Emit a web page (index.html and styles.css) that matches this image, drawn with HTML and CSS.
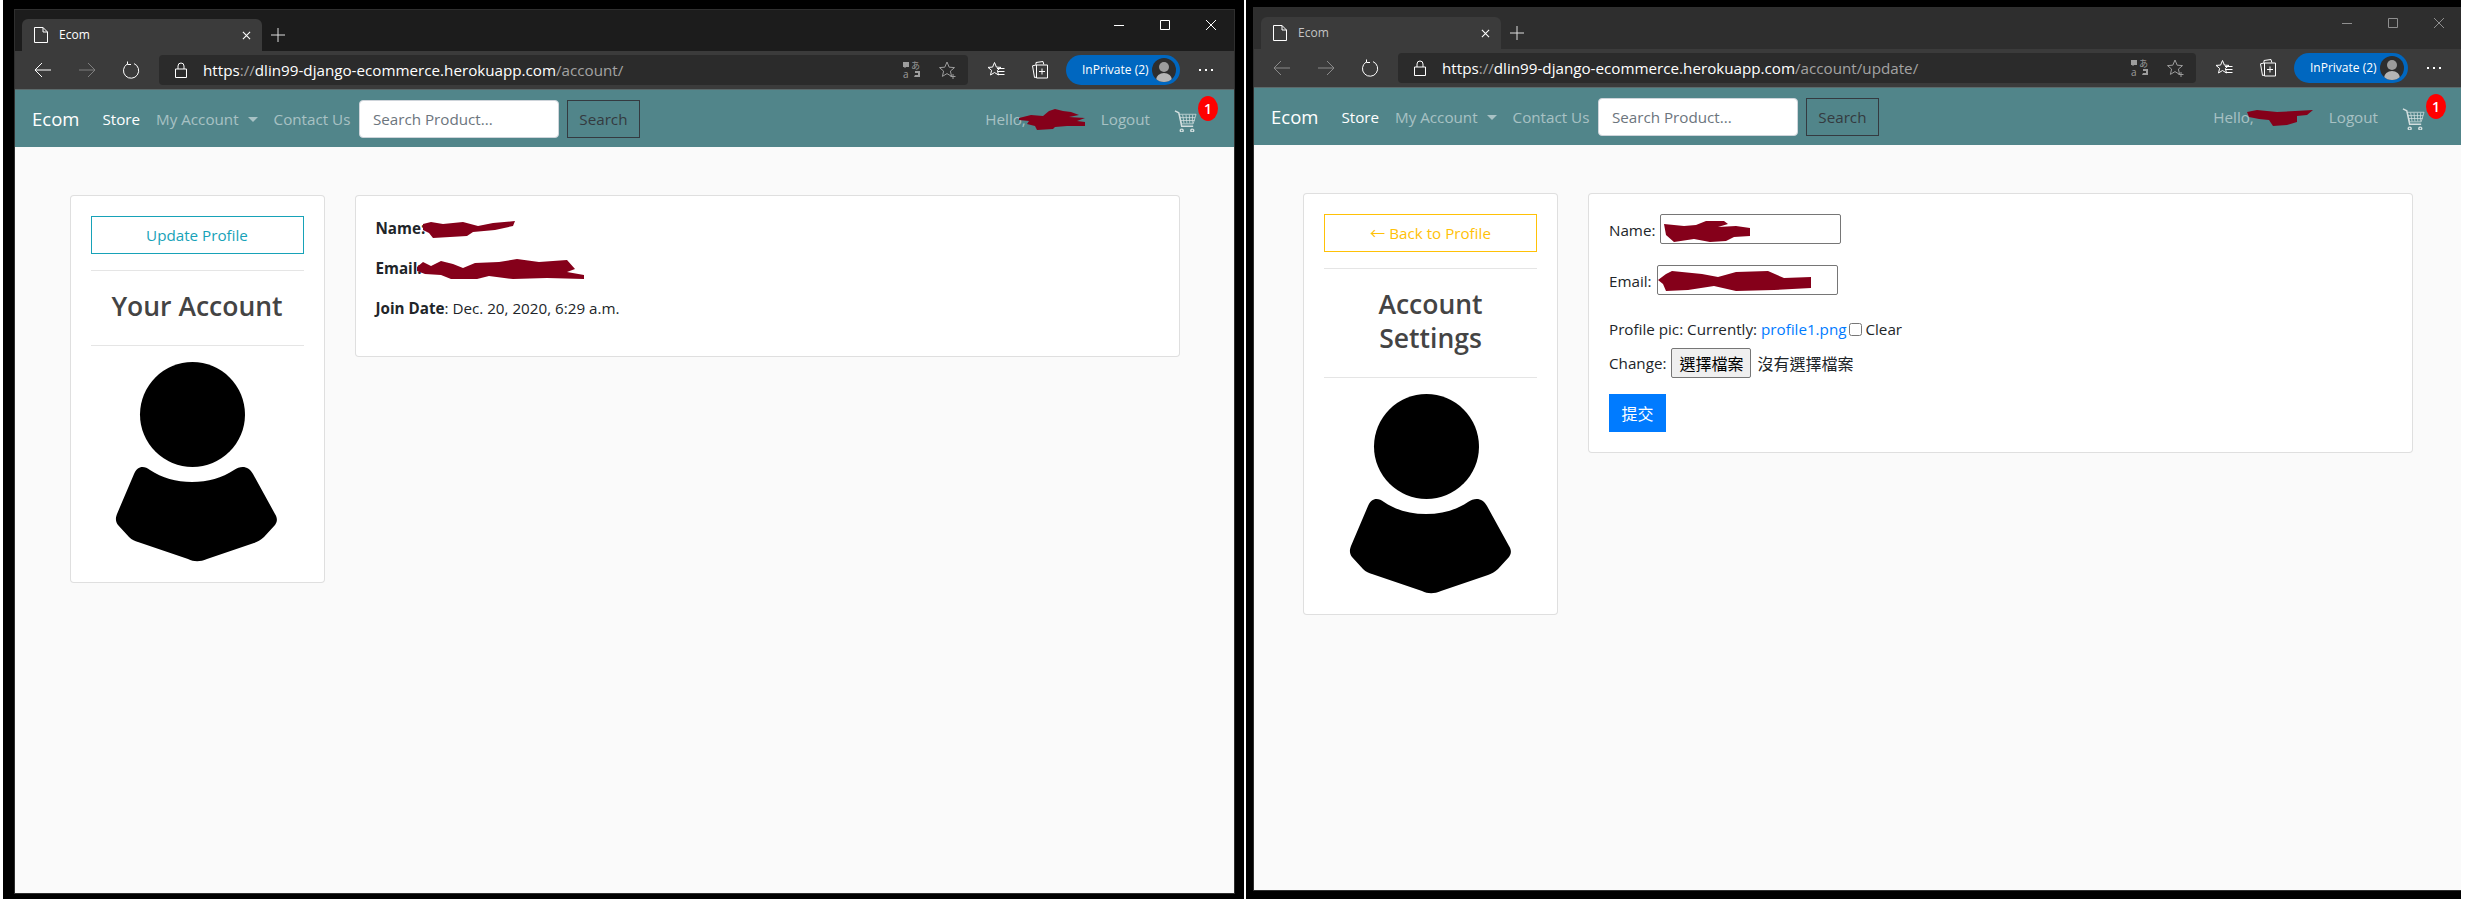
FILE: index.html
```html
<!DOCTYPE html>
<html lang="en">
<head>
    <meta charset="utf-8">
    <title>Ecom</title>
    <link rel="stylesheet" href="styles.css">
</head>
<body>
    <!-- shared browser + page icons -->
    <svg class="sprite" xmlns="http://www.w3.org/2000/svg">
        <symbol id="i-doc" viewBox="0 0 14 16"><path d="M.5.5h8.500l4.500 4.500v10.500H.5zM9 .5v4.500h4.500" fill="none" stroke="currentColor"/></symbol>
        <symbol id="i-close" viewBox="0 0 10 10"><path d="M1 1l8 8M9 1l-8 8" fill="none" stroke="currentColor" stroke-width="1.200"/></symbol>
        <symbol id="i-plus" viewBox="0 0 14 14"><path d="M7 0v14M0 7h14" fill="none" stroke="currentColor"/></symbol>
        <symbol id="i-min" viewBox="0 0 12 12"><path d="M1 6.500h10" fill="none" stroke="currentColor"/></symbol>
        <symbol id="i-max" viewBox="0 0 12 12"><path d="M1.500 1.500h9v9h-9z" fill="none" stroke="currentColor"/></symbol>
        <symbol id="i-x" viewBox="0 0 12 12"><path d="M1 1l10 10M11 1L1 11" fill="none" stroke="currentColor"/></symbol>
        <symbol id="i-back" viewBox="0 0 18 16"><path d="M1 8h16M8 1L1 8l7 7" fill="none" stroke="currentColor"/></symbol>
        <symbol id="i-forward" viewBox="0 0 18 16"><path d="M1 8h16M10 1l7 7-7 7" fill="none" stroke="currentColor"/></symbol>
        <symbol id="i-refresh" viewBox="0 0 18 18"><path d="M5 3.200A7.600 7.600 0 1 0 12 2.600M5.500 .5V3.500H9" fill="none" stroke="currentColor"/></symbol>
        <symbol id="i-lock" viewBox="0 0 12 16"><path d="M.5 7h11v8.500H.5zM3 7V4a3 3 0 0 1 6 0v3" fill="none" stroke="currentColor"/></symbol>
        <symbol id="i-translate" viewBox="0 0 20 18">
            <path d="M1 1h6v5H4l-1 1-1-1H1zM13 10l5 0v6h-6l1-2h3v-2h-3z" fill="currentColor"/>
            <text x="9" y="7.500" font-size="9" fill="currentColor">あ</text>
            <text x="1" y="17" font-size="10" fill="currentColor">a</text>
        </symbol>
        <symbol id="i-star-plus" viewBox="0 0 18 18"><path d="M8 1l2.200 5.200 5.300.4-4.100 3.500 1.200 5.300L8 12.600 3.400 15.400l1.200-5.300L.5 6.600l5.300-.4zM14 13v5M11.500 15.500h5" fill="none" stroke="currentColor"/></symbol>
        <symbol id="i-favs" viewBox="0 0 18 18"><path d="M7.500 1.500l1.900 4.600 4.600.3-3.600 3 1.100 4.600-4-2.500-4 2.500 1.100-4.600-3.600-3 4.600-.3z" fill="none" stroke="currentColor"/><path d="M10 7.500h7.500M10.500 10.500h7M10.500 13.500h7" stroke="currentColor"/></symbol>
        <symbol id="i-collections" viewBox="0 0 18 18"><path d="M5 4l-3.500.8 2 11.700 2.500-.5M5 4V1.500l7-1 .8 3" fill="none" stroke="currentColor"/><path d="M5.500 4h11v13h-11zM11 7.500v6M8 10.500h6" fill="none" stroke="currentColor"/></symbol>
        <symbol id="i-cart" viewBox="0 0 24 24">
            <path d="M1 2l4 2 3 14h12M8 21a1.500 1.500 0 1 0 .1 0M19 21a1.500 1.500 0 1 0 .1 0" fill="none" stroke="currentColor" stroke-width="1.500"/>
            <path d="M5.500 5.500h17.500l-3 10H8zM9 6l1.500 9M12.500 6l1 9M16 6l.5 9M19.500 6l-.5 9M6.500 9h15.500M7 12h14.500" fill="none" stroke="currentColor" stroke-width=".8"/>
        </symbol>
        <symbol id="i-person" viewBox="0 0 200 200">
            <circle cx="95.500" cy="52.500" r="52.500"/>
            <path d="M37 112C40 104 47 103 53 108 65 116 79 120 95 120 111 120 125 116 137 108 144 103 152 104 156 112L178 152C181 157 180 160 178 163L167 175C164 178 160 180 157 181L110 197C103 200 97 200 91 197L41 180C38 179 35 178 32 175L21 163C19 160 18 157 20 152Z"/>
        </symbol>
    </svg>

    <div class="screen">
        <!-- Account page -->
        <div class="window window-main">
            <div class="tabstrip">
                <div class="tab">
                    <svg class="tab-icon"><use href="#i-doc"/></svg>
                    <span class="tab-title">Ecom</span>
                    <svg class="tab-close"><use href="#i-close"/></svg>
                </div>
                <svg class="new-tab"><use href="#i-plus"/></svg>
                <div class="win-controls">
                    <span class="win-btn"><svg><use href="#i-min"/></svg></span>
                    <span class="win-btn"><svg><use href="#i-max"/></svg></span>
                    <span class="win-btn"><svg><use href="#i-x"/></svg></span>
                </div>
            </div>
            <div class="toolbar">
                <span class="tool-btn"><svg class="icon-arrow"><use href="#i-back"/></svg></span>
                <span class="tool-btn is-off"><svg class="icon-arrow"><use href="#i-forward"/></svg></span>
                <span class="tool-btn"><svg class="icon-refresh"><use href="#i-refresh"/></svg></span>
                <div class="address">
                    <svg class="icon-lock"><use href="#i-lock"/></svg>
                    <span class="url">https<span class="url-dim">://</span>dlin99-django-ecommerce.herokuapp.com<span class="url-dim">/account/</span></span>
                    <svg class="icon-translate"><use href="#i-translate"/></svg>
                    <svg class="icon-star"><use href="#i-star-plus"/></svg>
                </div>
                <span class="tool-btn"><svg class="icon-tool"><use href="#i-favs"/></svg></span>
                <span class="tool-btn"><svg class="icon-tool"><use href="#i-collections"/></svg></span>
                <div class="inprivate">
                    <span>InPrivate (2)</span>
                    <span class="avatar"><span class="avatar-head"></span><span class="avatar-body"></span></span>
                </div>
                <span class="tool-btn dots"><i></i><i></i><i></i></span>
            </div>
            <nav class="navbar">
                <a class="brand">Ecom</a>
                <a class="nav-link is-active">Store</a>
                <a class="nav-link">My Account<span class="caret"></span></a>
                <a class="nav-link nav-contact">Contact Us</a>
                <input class="search-input" placeholder="Search Product...">
                <button class="search-btn">Search</button>
                <div class="nav-right">
                    <span class="hello">Hello,<svg class="scribble scrib-hello" viewBox="0 0 66 21" preserveAspectRatio="none"><path d="M0 9L12 6 24 7 30 2 36 0 44 2 52 3 60 6 50 8 66 9 58 12 66 13 66 17 48 17 36 18 34 20 18 21 16 17 8 15 10 12 0 11Z"/></svg></span>
                    <a class="nav-link nav-logout">Logout</a>
                    <span class="cart">
                        <svg class="cart-icon"><use href="#i-cart"/></svg>
                        <span class="cart-badge">1</span>
                    </span>
                </div>
            </nav>
            <main class="page">
                <div class="container">
                    <aside class="side-card">
                        <a class="btn btn-info">Update Profile</a>
                        <hr>
                        <h3>Your Account</h3>
                        <hr>
                        <svg class="person"><use href="#i-person"/></svg>
                    </aside>
                    <section class="info-card">
                        <p><strong>Name:</strong><svg class="scribble scrib-name" viewBox="0 0 92 17" preserveAspectRatio="none"><path d="M0 3L8 1 20 3 40 1 55 5 70 2 92 0 90 5 72 9 50 11 44 15 10 17 6 12 0 9Z"/></svg></p>
                        <p><strong>Email:</strong><svg class="scribble scrib-email" viewBox="0 0 167 20" preserveAspectRatio="none"><path d="M0 8L6 3 14 7 24 2 36 5 46 9 58 4 82 3 100 0 122 3 150 1 158 10 150 13 167 16 167 20 130 19 96 20 72 17 60 20 34 20 24 16 8 15 0 12Z"/></svg></p>
                        <p><strong>Join Date</strong>: Dec. 20, 2020, 6:29 a.m.</p>
                    </section>
                </div>
            </main>
        </div>

        <div class="divider"></div>

        <!-- Account settings page -->
        <div class="window window-update">
            <div class="tabstrip">
                <div class="tab">
                    <svg class="tab-icon"><use href="#i-doc"/></svg>
                    <span class="tab-title">Ecom</span>
                    <svg class="tab-close"><use href="#i-close"/></svg>
                </div>
                <svg class="new-tab"><use href="#i-plus"/></svg>
                <div class="win-controls">
                    <span class="win-btn"><svg><use href="#i-min"/></svg></span>
                    <span class="win-btn"><svg><use href="#i-max"/></svg></span>
                    <span class="win-btn"><svg><use href="#i-x"/></svg></span>
                </div>
            </div>
            <div class="toolbar">
                <span class="tool-btn is-off"><svg class="icon-arrow"><use href="#i-back"/></svg></span>
                <span class="tool-btn is-off"><svg class="icon-arrow"><use href="#i-forward"/></svg></span>
                <span class="tool-btn"><svg class="icon-refresh"><use href="#i-refresh"/></svg></span>
                <div class="address">
                    <svg class="icon-lock"><use href="#i-lock"/></svg>
                    <span class="url">https<span class="url-dim">://</span>dlin99-django-ecommerce.herokuapp.com<span class="url-dim">/account/update/</span></span>
                    <svg class="icon-translate"><use href="#i-translate"/></svg>
                    <svg class="icon-star"><use href="#i-star-plus"/></svg>
                </div>
                <span class="tool-btn"><svg class="icon-tool"><use href="#i-favs"/></svg></span>
                <span class="tool-btn"><svg class="icon-tool"><use href="#i-collections"/></svg></span>
                <div class="inprivate">
                    <span>InPrivate (2)</span>
                    <span class="avatar"><span class="avatar-head"></span><span class="avatar-body"></span></span>
                </div>
                <span class="tool-btn dots"><i></i><i></i><i></i></span>
            </div>
            <nav class="navbar">
                <a class="brand">Ecom</a>
                <a class="nav-link is-active">Store</a>
                <a class="nav-link">My Account<span class="caret"></span></a>
                <a class="nav-link nav-contact">Contact Us</a>
                <input class="search-input" placeholder="Search Product...">
                <button class="search-btn">Search</button>
                <div class="nav-right">
                    <span class="hello">Hello,<svg class="scribble scrib-hello-2" viewBox="0 0 66 16" preserveAspectRatio="none"><path d="M0 2L10 0 30 2 66 0 60 5 50 6 50 12 40 15 26 16 22 10 12 9 2 7Z"/></svg></span>
                    <a class="nav-link nav-logout">Logout</a>
                    <span class="cart">
                        <svg class="cart-icon"><use href="#i-cart"/></svg>
                        <span class="cart-badge">1</span>
                    </span>
                </div>
            </nav>
            <main class="page">
                <div class="container">
                    <aside class="side-card">
                        <a class="btn btn-warning">&#8592; Back to Profile</a>
                        <hr>
                        <h3>Account Settings</h3>
                        <hr>
                        <svg class="person"><use href="#i-person"/></svg>
                    </aside>
                    <section class="info-card">
                        <form>
                            <div class="form-row row-name">
                                <label>Name:</label>
                                <span class="field">
                                    <input class="text-field" type="text">
                                    <svg class="scribble scrib-field-name" viewBox="0 0 86 21" preserveAspectRatio="none"><path d="M0 3L20 5 32 4 42 0 60 0 64 3 54 6 72 5 86 7 86 15 70 16 62 20 46 21 30 18 10 21 2 14Z"/></svg>
                                </span>
                            </div>
                            <div class="form-row row-email">
                                <label>Email:</label>
                                <span class="field">
                                    <input class="text-field" type="email">
                                    <svg class="scribble scrib-field-email" viewBox="0 0 153 20" preserveAspectRatio="none"><path d="M0 9L8 3 14 0 44 3 60 6 78 1 110 0 126 7 153 6 153 17 116 19 78 20 56 15 30 19 8 20 5 13Z"/></svg>
                                </span>
                            </div>
                            <p class="form-line">Profile pic: Currently: <a class="file-link">profile1.png</a><input class="clear-box" type="checkbox">Clear</p>
                            <div class="form-row row-file">
                                <label>Change:</label>
                                <button type="button" class="file-btn">選擇檔案</button>
                                <span class="file-none">沒有選擇檔案</span>
                            </div>
                            <button type="button" class="submit-btn">提交</button>
                        </form>
                    </section>
                </div>
            </main>
        </div>
    </div>
</body>
</html>
```

FILE: styles.css
```css
/* Global styles */
* {
    box-sizing: border-box;
}

html, body {
    margin: 0;
    padding: 0;
    height: 899px;
    overflow: hidden;
    background: #fff;
    font-family: "Open Sans", "Noto Sans CJK TC", sans-serif;
    font-size: 15.2px;
    line-height: 24px;
    color: #212529;
}

.sprite {
    display: none;
}

/* Black desktop behind both browser windows */
.screen {
    display: flex;
    align-items: flex-start;
    margin-left: 3px;
    width: 2458px;
    height: 899px;
    background: #000;
    overflow: hidden;
}

.divider {
    flex: none;
    width: 2px;
    height: 899px;
    margin: 0 7px 0 9px;
    background: #fff;
}

.window {
    flex: none;
    display: flex;
    flex-direction: column;
    border: 1px solid #2f2f2f;
}

.window-main {
    width: 1221px;
    height: 885px;
    margin: 9px 0 0 11px;
}

.window-update {
    width: 1210px;
    height: 884px;
    margin-top: 7px;
}

/* Tab strip */
.tabstrip {
    flex: none;
    display: flex;
    align-items: flex-end;
    height: 41px;
    padding-left: 7px;
    background: #1c1c1c;
    color: #fff;
}

.window-update .tabstrip {
    background: #2e2e2e;
}

.tab {
    display: flex;
    align-items: center;
    width: 240px;
    height: 32px;
    padding: 0 12px;
    background: #3b3b3b;
    border-radius: 6px 6px 0 0;
}

.tab-icon {
    width: 14px;
    height: 16px;
}

.tab-title {
    margin-left: 11px;
    font-size: 12px;
}

.window-update .tab-title {
    color: #c4c4c4;
}

.tab-close {
    width: 9px;
    height: 9px;
    margin-left: auto;
    margin-right: -1px;
}

.new-tab {
    width: 14px;
    height: 14px;
    margin: 0 0 9px 9px;
    color: #ddd;
}

.win-controls {
    display: flex;
    align-self: flex-start;
    margin-left: auto;
}

.win-btn {
    display: flex;
    align-items: center;
    justify-content: center;
    width: 46px;
    height: 30px;
}

.win-btn svg {
    width: 12px;
    height: 12px;
}

.window-update .win-btn {
    color: #8f8f8f;
}

/* Address bar row */
.toolbar {
    flex: none;
    display: flex;
    align-items: center;
    height: 38px;
    padding: 0 6px;
    background: #3b3b3b;
    color: #fff;
}

.tool-btn {
    flex: none;
    display: flex;
    align-items: center;
    justify-content: center;
    width: 44px;
    height: 30px;
}

.tool-btn.is-off {
    color: #7f7f7f;
}

.window-update .icon-arrow {
    color: #8a8a8a;
}

.icon-arrow {
    width: 18px;
    height: 16px;
}

.icon-refresh {
    width: 18px;
    height: 18px;
}

.icon-tool {
    width: 18px;
    height: 18px;
}

.address {
    flex: 1;
    display: flex;
    align-items: center;
    height: 30px;
    margin: 0 6px;
    padding: 0 11px 0 16px;
    background: #2b2b2b;
    border-radius: 4px;
}

.icon-lock {
    width: 12px;
    height: 16px;
}

.url {
    margin-left: 16px;
    font-size: 15.2px;
    white-space: nowrap;
}

.url-dim {
    color: #a3a3a3;
}

.icon-translate {
    width: 20px;
    height: 18px;
    margin-left: auto;
    color: #9d9d9d;
}

.icon-star {
    width: 18px;
    height: 18px;
    margin-left: 17px;
    color: #9d9d9d;
}

.inprivate {
    flex: none;
    display: flex;
    align-items: center;
    justify-content: space-between;
    width: 114px;
    height: 30px;
    margin: 0 4px;
    padding: 0 4px 0 16px;
    background: #0067c0;
    border-radius: 15px;
    font-size: 12px;
}

.avatar {
    position: relative;
    width: 24px;
    height: 24px;
    background: #2e2e2e;
    border-radius: 50%;
    overflow: hidden;
}

.avatar-head {
    position: absolute;
    top: 4px;
    left: 7px;
    width: 10px;
    height: 10px;
    background: #9c9c9c;
    border-radius: 50%;
}

.avatar-body {
    position: absolute;
    top: 15px;
    left: 4px;
    width: 16px;
    height: 14px;
    background: #b5b5b5;
    border-radius: 50%;
}

.dots {
    gap: 4px;
}

.dots i {
    width: 2px;
    height: 2px;
    background: #fff;
}

/* Site navigation */
.navbar {
    flex: none;
    display: flex;
    align-items: center;
    height: 58px;
    padding: 0 16px 0 17px;
    background: #51858a;
    border-top: 1px solid #5c6a6b;
}

.brand {
    margin-right: 15px;
    font-size: 18.500px;
    color: #fff;
}

.nav-link {
    padding: 0 8px;
    color: rgba(255, 255, 255, 0.5);
    white-space: nowrap;
}

.nav-link.is-active {
    color: #fff;
}

.caret {
    display: inline-block;
    margin-left: 9px;
    vertical-align: 3px;
    border-top: 5px solid rgba(255, 255, 255, 0.5);
    border-left: 5px solid transparent;
    border-right: 5px solid transparent;
}

.nav-contact {
    padding-right: 0;
}

.search-input {
    width: 200px;
    height: 38px;
    margin-left: 8.500px;
    padding: 0 13px;
    background: #fff;
    border: 1px solid #ced4da;
    border-radius: 4px;
    font: inherit;
}

.search-input::placeholder {
    color: #6c757d;
}

.search-btn {
    width: 73px;
    height: 38px;
    margin-left: 8px;
    padding: 0;
    background: transparent;
    border: 1px solid #343a40;
    border-radius: 0;
    font: inherit;
    color: #343a40;
}

.nav-right {
    display: flex;
    align-items: center;
    margin-left: auto;
}

.hello {
    display: flex;
    align-items: center;
    color: rgba(255, 255, 255, 0.5);
    white-space: nowrap;
}

.nav-logout {
    margin-left: 4px;
}

.scribble {
    flex: none;
    fill: #85001a;
}

.scrib-hello {
    width: 66px;
    height: 21px;
    margin: 2px 4px 0 -7px;
}

.scrib-hello-2 {
    width: 66px;
    height: 16px;
    margin: 3px 4px 0 -7px;
}

.cart {
    position: relative;
    display: block;
    width: 44px;
    height: 30px;
    margin-left: 16px;
}

.cart-icon {
    display: block;
    width: 23px;
    height: 23px;
    margin-top: 5px;
    color: #d3dfdf;
}

.cart-badge {
    position: absolute;
    top: -8px;
    left: 24px;
    width: 20px;
    height: 25px;
    background: #f00;
    border-radius: 50%;
    font-size: 14px;
    font-weight: 600;
    line-height: 25px;
    text-align: center;
    color: #fff;
}

/* Page body */
.page {
    flex: 1;
    padding-top: 48px;
    background: #fafafa;
}

.container {
    display: flex;
    gap: 30px;
    width: 1110px;
    margin: 0 auto;
    align-items: flex-start;
}

.side-card,
.info-card {
    background: #fff;
    border: 1px solid rgba(0, 0, 0, 0.125);
    border-radius: 4px;
    padding: 20px;
}

.side-card {
    flex: none;
    width: 255px;
}

.info-card {
    flex: 1;
}

.side-card hr {
    height: 0;
    margin: 16px 0;
    border: 0;
    border-top: 1px solid rgba(0, 0, 0, 0.1);
}

.side-card h3 {
    margin: 0;
    padding: 2px 12px 6px;
    font-size: 26.500px;
    font-weight: 600;
    line-height: 34px;
    text-align: center;
    color: #444;
}

.btn {
    display: block;
    height: 38px;
    line-height: 36px;
    text-align: center;
    border: 1px solid;
}

.btn-info {
    color: #17a2b8;
    border-color: #17a2b8;
}

.btn-warning {
    color: #ffc107;
    border-color: #ffc107;
}

.person {
    display: block;
    width: 200px;
    height: 200px;
    margin: 0 auto;
}

.info-card p {
    display: flex;
    align-items: center;
    margin: 0 0 16px;
    white-space: pre;
}

.info-card strong {
    font-weight: 700;
}

.scrib-name {
    width: 92px;
    height: 17px;
    margin: 2px 0 0 -2px;
}

.scrib-email {
    width: 167px;
    height: 20px;
    margin: 2px 0 0 -5px;
}

/* Profile form */
.form-row {
    display: flex;
    align-items: center;
    margin-bottom: 16px;
}

.form-row label {
    margin-right: 5px;
}

.row-name {
    height: 35px;
    align-items: flex-start;
}

.row-email {
    height: 36px;
    align-items: flex-start;
}

.row-name label,
.row-email label {
    margin-top: 4px;
}

.row-file {
    height: 30px;
    margin-top: -9px;
}

.field {
    position: relative;
    display: block;
}

.text-field {
    display: block;
    width: 181px;
    height: 30px;
    padding: 0;
    background: #fff;
    border: 1px solid #767676;
    border-radius: 2px;
}

.field .scribble {
    position: absolute;
}

.scrib-field-name {
    top: 7px;
    left: 4px;
    width: 86px;
    height: 21px;
}

.scrib-field-email {
    top: 6px;
    left: 1px;
    width: 153px;
    height: 20px;
}

.file-link {
    color: #007bff;
}

.clear-box {
    width: 13px;
    height: 13px;
    margin: 0 3px;
}

.file-btn {
    width: 80px;
    height: 30px;
    padding: 0;
    background: #efefef;
    border: 1px solid #767676;
    border-radius: 2px;
    font-family: "Noto Sans CJK TC", sans-serif;
    font-size: 16px;
    color: #000;
}

.file-none {
    margin-left: 6px;
    font-family: "Noto Sans CJK TC", sans-serif;
    font-size: 16px;
}

.submit-btn {
    display: block;
    width: 57px;
    height: 38px;
    padding: 0;
    background: #007bff;
    border: 0;
    font-family: "Noto Sans CJK TC", sans-serif;
    font-size: 16px;
    color: #fff;
}
```
